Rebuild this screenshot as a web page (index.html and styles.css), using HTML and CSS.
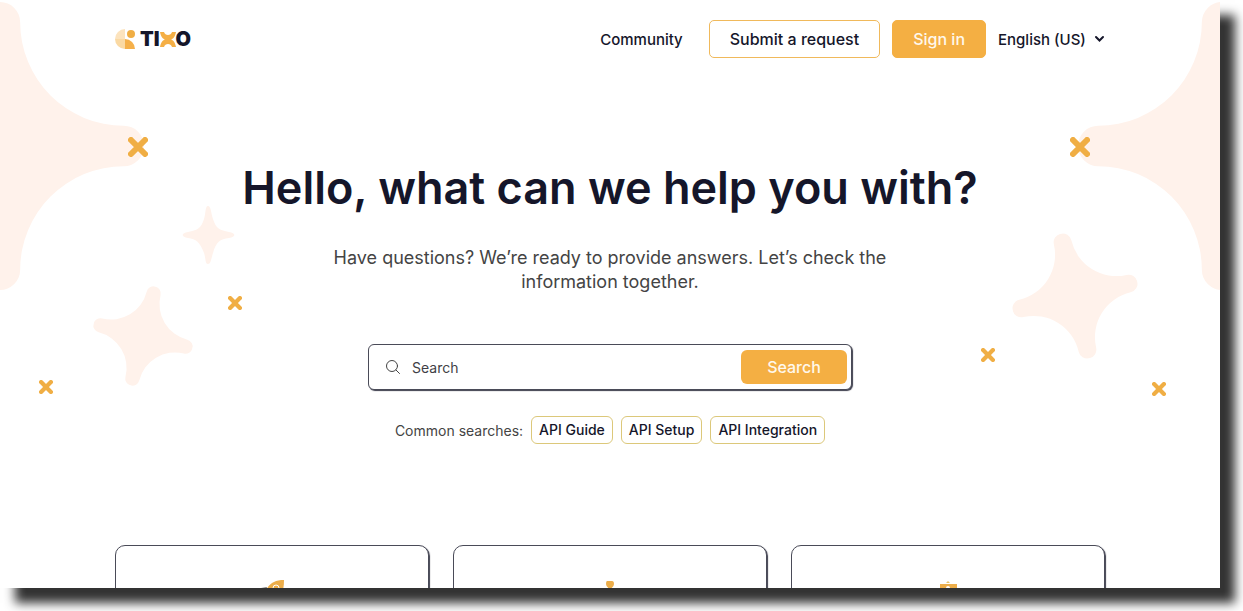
FILE: index.html
```html
<!DOCTYPE html>
<html lang="en">
<head>
    <meta charset="UTF-8">
    <meta name="viewport" content="width=device-width, initial-scale=1.0">
    <title>Tixo Help Center</title>
    <link rel="stylesheet" href="styles.css">
</head>
<body>
    <!-- shapes reused by the background -->
    <svg class="sprite" aria-hidden="true">
        <symbol id="star" viewBox="-100 -100 200 200">
            <path d="M-14 -86A14 14 0 0 1 14 -86A72 72 0 0 0 86 -14A14 14 0 0 1 86 14A72 72 0 0 0 14 86A14 14 0 0 1 -14 86A72 72 0 0 0 -86 14A14 14 0 0 1 -86 -14A72 72 0 0 0 -14 -86Z"/>
        </symbol>
        <symbol id="cross" viewBox="0 0 20 20">
            <path d="M3 3L17 17M17 3L3 17" stroke-width="6" stroke-linecap="round"/>
        </symbol>
    </svg>

    <div class="window">
        <svg class="decor decor-left" width="260" height="400" aria-hidden="true">
            <g class="stars">
                <use href="#star" x="-144" y="2" width="288" height="288"/>
                <path d="M208 206C211 206 211 213 213 219C216 229 220 230 229 232C236 233 236 237 229 238C220 239 216 242 213 253C211 259 211 264 208 264C205 264 206 259 204 253C200 242 196 239 188 238C181 237 181 233 188 232C197 230 201 229 204 219C206 213 205 206 208 206Z"/>
                <use href="#star" x="92" y="285" width="102" height="102" transform="rotate(14 143 336)"/>
            </g>
            <g class="crosses">
                <use href="#cross" x="128" y="137" width="20" height="20"/>
                <use href="#cross" x="228" y="296" width="14" height="14"/>
                <use href="#cross" x="39" y="380" width="14" height="14"/>
            </g>
        </svg>
        <svg class="decor decor-right" width="260" height="400" aria-hidden="true">
            <g class="stars">
                <use href="#star" x="118" y="2" width="288" height="288"/>
                <use href="#star" x="51" y="232" width="128" height="128" transform="rotate(-13 115 296)"/>
            </g>
            <g class="crosses">
                <use href="#cross" x="110" y="137" width="20" height="20"/>
                <use href="#cross" x="21" y="348" width="14" height="14"/>
                <use href="#cross" x="192" y="382" width="14" height="14"/>
            </g>
        </svg>

        <header class="header container">
            <a class="logo" href="#" aria-label="Tixo">
                <svg width="20" height="20" viewBox="0 0 20 20">
                    <path fill="#fce3bd" d="M10 0A10 10 0 0 0 0 10H10Z"/>
                    <path fill="#fad9a3" d="M10 10H0A10 10 0 0 0 10 20Z"/>
                    <circle fill="#f0ae44" cx="16" cy="5" r="4"/>
                    <path fill="#f5b04a" d="M10 10A10 10 0 0 1 20 20H10Z"/>
                </svg>
                <span class="logo-text">TI<svg width="16" height="15" viewBox="0 0 16 15">
                    <path fill="#f5af45" d="M0 0H4C5 4 11 4 12 0H16C15 5 13 7 11 7.500C13 8 15 10 16 15H12C11 11 5 11 4 15H0C1 10 3 8 5 7.500C3 7 1 5 0 0Z"/>
                </svg>O</span>
            </a>
            <nav class="nav">
                <a class="nav-link" href="#">Community</a>
                <a class="btn btn-outline" href="#">Submit a request</a>
                <a class="btn btn-primary" href="#">Sign in</a>
                <label class="language">
                    <select aria-label="Language">
                        <option>English (US)</option>
                    </select>
                    <svg width="11" height="8" viewBox="0 0 11 8">
                        <path d="M2 2L5.500 5.500L9 2" fill="none" stroke="#15162a" stroke-width="2" stroke-linecap="round"/>
                    </svg>
                </label>
            </nav>
        </header>

        <main>
            <section class="hero">
                <h1>Hello, what can we help you with?</h1>
                <p class="subtitle">Have questions? We’re ready to provide answers. Let’s check the information together.</p>
                <form class="search" role="search">
                    <svg width="14" height="14" viewBox="0 0 14 14" aria-hidden="true">
                        <g fill="none" stroke="#444" stroke-linecap="round">
                            <circle cx="6" cy="6" r="5.500"/>
                            <path d="M10 10L13.500 13.500"/>
                        </g>
                    </svg>
                    <input type="search" placeholder="Search" aria-label="Search">
                    <button type="submit">Search</button>
                </form>
                <div class="common">
                    <span>Common searches:</span>
                    <a class="chip" href="#">API Guide</a>
                    <a class="chip" href="#">API Setup</a>
                    <a class="chip" href="#">API Integration</a>
                </div>
            </section>

            <section class="cards container">
                <a class="card" href="#" aria-label="Getting started">
                    <svg width="36" height="36" viewBox="0 0 36 36">
                        <path fill="#edae4a" d="M30 0C20 0 14 4 11 13L10 20L17 22C27 18 30 12 30 0Z"/>
                        <circle cx="22" cy="8" r="3" fill="#edae4a" stroke="#fff" stroke-width="1"/>
                        <path fill="#777" d="M13 7L7 8L4 13L11 13Z"/>
                    </svg>
                </a>
                <a class="card" href="#" aria-label="Community">
                    <svg width="36" height="36" viewBox="0 0 36 36">
                        <path fill="#edae4a" d="M15 1H20Q22 1 22 4Q22 7 18 9Q14 7 14 4Q14 1 15 1Z"/>
                        <circle cx="18" cy="20" r="8" fill="#edae4a"/>
                    </svg>
                </a>
                <a class="card" href="#" aria-label="Resources">
                    <svg width="36" height="36" viewBox="0 0 36 36">
                        <path fill="#e8c46a" d="M18 1L20 3H16Z"/>
                        <path fill="#edae4a" d="M10 4H27V24H10Z"/>
                        <circle cx="18" cy="8" r="2" fill="#fff"/>
                    </svg>
                </a>
            </section>
        </main>
    </div>
</body>
</html>
```

FILE: styles.css
```css
* {
    box-sizing: border-box;
}
body {
    display: grid;
    margin: 0;
    height: 100vh;
    padding: 0 23px 23px 0;
    overflow: hidden;
    background-color: #fff;
    color: #15162a;
    font-family: Inter, "Liberation Sans", sans-serif;
    font-size: 16px;
}
a {
    color: inherit;
    text-decoration: none;
}
.sprite {
    position: absolute;
    width: 0;
    height: 0;
}
.window {
    position: relative;
    height: 100%;
    overflow: hidden;
    background-color: #fff;
    box-shadow: 15px 15px 10px #333;
}
.container {
    max-width: 990px;
    margin: 0 auto;
}

/* background */
.decor {
    position: absolute;
    top: 0;
}
.decor-left {
    left: 0;
}
.decor-right {
    right: 0;
}
.stars {
    fill: #fff2eb;
}
.crosses {
    stroke: #f0ae44;
}

/* header */
.header {
    position: relative;
    display: flex;
    justify-content: space-between;
    align-items: center;
    height: 78px;
}
.logo,
.logo-text {
    display: flex;
    align-items: center;
}
.logo {
    gap: 5px;
}
.logo-text {
    font-size: 20px;
    font-weight: 900;
}
.nav {
    display: flex;
    align-items: center;
    gap: 12px;
    font-weight: 500;
}
.nav-link {
    margin-right: 14px;
    font-size: 15px;
}
.btn {
    height: 38px;
    padding: 0 20px;
    border: 1px solid #f0b95b;
    border-radius: 5px;
    line-height: 36px;
}
.btn-primary {
    background-color: #f4af43;
    border-color: #f4af43;
    color: #fff8ec;
}
.language {
    display: flex;
    align-items: center;
    gap: 8px;
    font-size: 15px;
}
.language select {
    appearance: none;
    padding: 0;
    border: none;
    background: none;
    color: inherit;
    font: inherit;
}

/* hero */
.hero {
    position: relative;
    display: flex;
    flex-direction: column;
    align-items: center;
    padding-top: 80px;
}
h1 {
    margin: 0;
    font-size: 45px;
    font-weight: 600;
    line-height: 60px;
    text-align: center;
}
.subtitle {
    max-width: 580px;
    margin: 28px 0 50px;
    color: #444;
    font-size: 18px;
    line-height: 24px;
    text-align: center;
}
.search {
    display: flex;
    align-items: center;
    gap: 12px;
    width: 484px;
    max-width: 100%;
    height: 46px;
    padding: 0 4px 0 17px;
    border: 1px solid #4a4b58;
    border-radius: 6px;
    background-color: #fff;
    box-shadow: 1px 1px 1px #3c3d4c;
}
.search input {
    flex: 1;
    min-width: 0;
    padding: 0;
    border: none;
    outline: none;
    background: none;
    font: 14px Inter, sans-serif;
}
.search input::placeholder {
    color: #3f3f46;
}
.search button {
    width: 106px;
    height: 34px;
    border: none;
    border-radius: 6px;
    background-color: #f4af43;
    color: #fff8ec;
    font: 500 16px Inter, sans-serif;
    cursor: pointer;
}
.common {
    display: flex;
    align-items: center;
    gap: 8px;
    margin-top: 26px;
    color: #444;
    font-size: 14px;
}
.chip {
    height: 28px;
    padding: 0 7px;
    border: 1px solid #dcc87a;
    border-radius: 6px;
    color: #15162a;
    font-weight: 500;
    line-height: 26px;
}

/* cards */
.cards {
    display: grid;
    grid-template-columns: repeat(3, 1fr);
    gap: 24px;
    margin-top: 101px;
}
.card {
    display: flex;
    justify-content: center;
    height: 220px;
    padding-top: 34px;
    border: 1px solid #4a4b58;
    border-radius: 10px;
    background-color: #fff;
    box-shadow: 1px 1px 1px #3c3d4c;
}
```
